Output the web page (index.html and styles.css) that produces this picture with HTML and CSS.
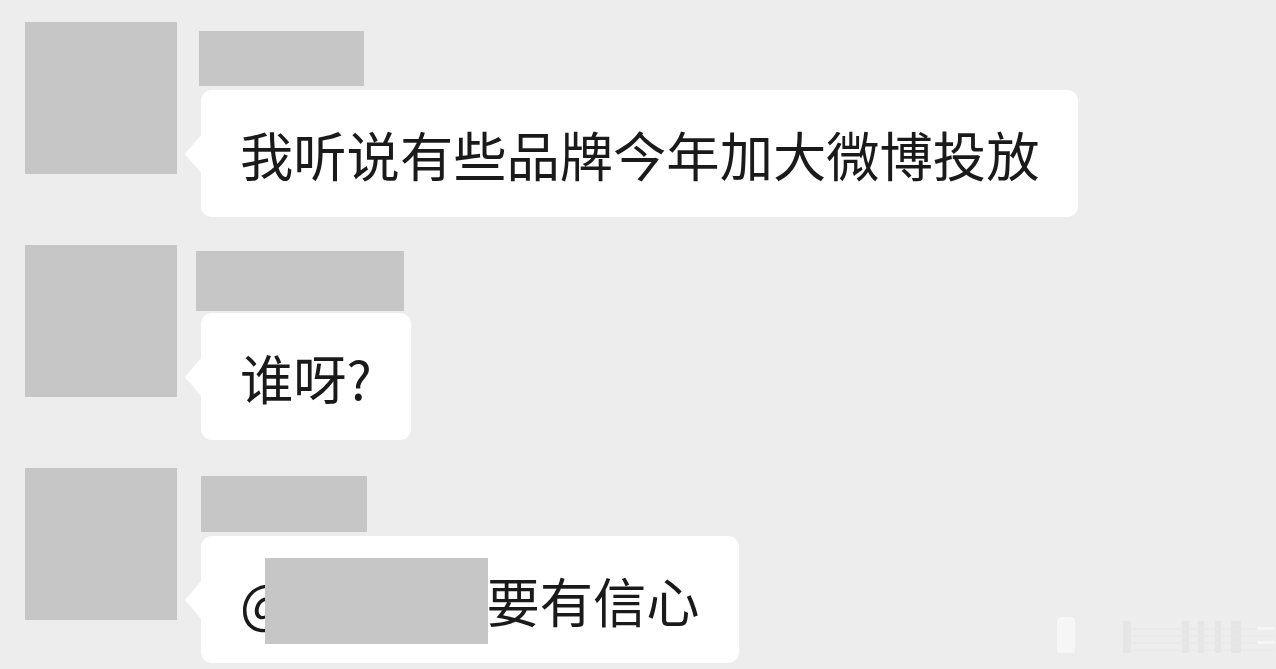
FILE: index.html
```html
<!DOCTYPE html>
<html lang="zh-CN">
<head>
<meta charset="utf-8">
<title>聊天截图</title>
<link rel="stylesheet" href="styles.css">
</head>
<body>
<main class="chat">
  <div class="msg">
    <div class="avatar"></div>
    <div class="body">
      <div class="name-row"><div class="name name-a"></div></div>
      <div class="bubble">我听说有些品牌今年加大微博投放</div>
    </div>
  </div>
  <div class="msg">
    <div class="avatar"></div>
    <div class="body">
      <div class="name-row"><div class="name name-b"></div></div>
      <div class="bubble">谁呀?</div>
    </div>
  </div>
  <div class="msg">
    <div class="avatar"></div>
    <div class="body">
      <div class="name-row"><div class="name name-c"></div></div>
      <div class="bubble">@<span class="redact"></span>要有信心</div>
    </div>
  </div>
</main>
<div class="watermark" aria-hidden="true">
  <svg width="220" height="50" viewBox="0 0 220 50">
    <rect x="2" y="14" width="18" height="37" rx="4" fill="#f7f7f7" opacity="0.8"/>
    <g opacity="0.3">
      <rect x="68" y="18" width="8" height="34" fill="#d8d8d8"/>
      <rect x="127" y="18" width="7" height="34" fill="#d8d8d8"/>
      <rect x="143" y="18" width="6" height="34" fill="#d8d8d8"/>
      <rect x="160" y="18" width="6" height="34" fill="#d8d8d8"/>
      <rect x="176" y="18" width="10" height="34" fill="#d4d4d4"/>
      <line x1="76" y1="26" x2="220" y2="26" stroke="#dcdcdc" stroke-width="1"/>
      <line x1="76" y1="33" x2="220" y2="33" stroke="#dcdcdc" stroke-width="1"/>
      <line x1="76" y1="40" x2="220" y2="40" stroke="#dcdcdc" stroke-width="1"/>
      <line x1="76" y1="47" x2="220" y2="47" stroke="#dcdcdc" stroke-width="1"/>
    </g>
    <rect x="202" y="24" width="18" height="3" fill="#f7f7f7" opacity="0.8"/>
    <rect x="202" y="38" width="18" height="3" fill="#f7f7f7" opacity="0.8"/>
  </svg>
</div>
</body>
</html>
```
FILE: styles.css
```css
html, body {
  margin: 0;
  padding: 0;
}
body {
  background: #ededed;
  width: 1276px;
  height: 669px;
  overflow: hidden;
  position: relative;
  font-family: "Noto Sans CJK SC", "Noto Sans", sans-serif;
  color: #1a1a1a;
}
.chat {
  display: flex;
  flex-direction: column;
  gap: 28px;
  padding: 22px 0 0 25px;
}
.msg {
  display: flex;
  align-items: flex-start;
  gap: 24px;
}
.avatar {
  width: 152px;
  height: 152px;
  background: #c6c6c6;
  flex: none;
}
.body {
  display: flex;
  flex-direction: column;
}
.name-row {
  height: 68px;
  display: flex;
  align-items: flex-start;
}
.name {
  background: #c6c6c6;
}
.name-a {
  width: 165px;
  height: 55px;
  margin: 9px 0 0 -2px;
}
.name-b {
  width: 208px;
  height: 60px;
  margin: 6px 0 0 -5px;
}
.name-c {
  width: 166px;
  height: 56px;
  margin: 8px 0 0 0;
}
.bubble {
  position: relative;
  background: #ffffff;
  border-radius: 11px;
  height: 127px;
  box-sizing: border-box;
  padding: 0 39px;
  display: flex;
  align-items: center;
  font-size: 53.3px;
  line-height: 63px;
  white-space: nowrap;
  align-self: flex-start;
}
.bubble::before {
  content: "";
  position: absolute;
  left: -16px;
  top: 50%;
  margin-top: -20px;
  width: 0;
  height: 0;
  border-top: 20px solid transparent;
  border-bottom: 20px solid transparent;
  border-right: 17px solid #ffffff;
}
.redact {
  display: inline-block;
  width: 223px;
  height: 86px;
  background: #c6c6c6;
  margin-left: -25px;
  margin-right: -2px;
  align-self: center;
  margin-top: 2px;
}
.watermark {
  position: absolute;
  left: 1055px;
  top: 603px;
  line-height: 0;
}
```
